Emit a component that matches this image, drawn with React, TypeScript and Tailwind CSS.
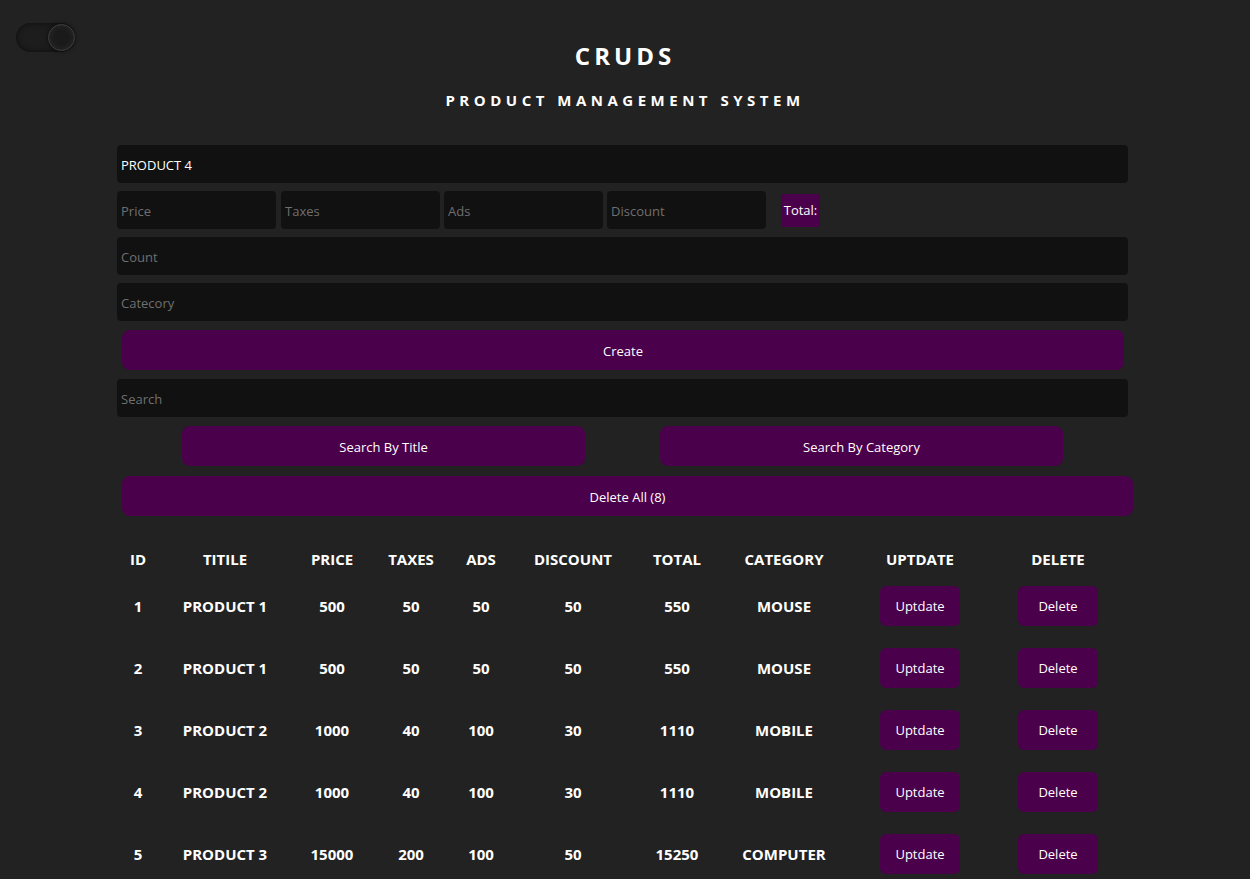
import React from "react";

const rows = [
  { id: 1, title: "PRODUCT 1", price: 500, taxes: 50, ads: 50, discount: 50, total: 550, category: "MOUSE" },
  { id: 2, title: "PRODUCT 1", price: 500, taxes: 50, ads: 50, discount: 50, total: 550, category: "MOUSE" },
  { id: 3, title: "PRODUCT 2", price: 1000, taxes: 40, ads: 100, discount: 30, total: 1110, category: "MOBILE" },
  { id: 4, title: "PRODUCT 2", price: 1000, taxes: 40, ads: 100, discount: 30, total: 1110, category: "MOBILE" },
  { id: 5, title: "PRODUCT 3", price: 15000, taxes: 200, ads: 100, discount: 50, total: 15250, category: "COMPUTER" },
];

const inputCls =
  "h-[38px] rounded-[4px] bg-[#111111] px-[4px] pt-[2px] text-[13px] text-white placeholder:text-[#6f6f6f] outline-none";

const btnCls = "h-[40px] rounded-[8px] bg-[#4b004b] pt-[3px] text-[13px]";

export default function App() {
  return (
    <div
      className="min-h-[879px] w-full bg-[#222222] text-white"
      style={{ fontFamily: '"Open Sans", "Noto Sans", sans-serif' }}
    >
      <div className="relative">
        <div className="absolute left-[16px] top-[23px] h-[29px] w-[59px] rounded-full bg-[#1d1d1d] shadow-[inset_0_0_6px_rgba(0,0,0,0.6)]">
          <div className="absolute right-[0px] top-[1px] h-[27px] w-[27px] rounded-full border border-[#3e3e3e] bg-[radial-gradient(circle_at_50%_50%,#1a1a1a_40%,#2a2a2a_100%)] shadow-[0_0_4px_rgba(0,0,0,0.7)]" />
        </div>
      </div>

      <div className="mx-auto flex w-[1016px] flex-col pt-[38px]">
        <h1 className="text-center text-[24px] font-bold leading-[36px] tracking-[4px]">CRUDS</h1>
        <h2 className="mt-[16px] text-center text-[15px] font-bold leading-[20px] tracking-[4.5px]">
          PRODUCT MANAGEMENT SYSTEM
        </h2>

        <div className="mt-[35px] flex flex-col">
          <input className={`${inputCls} w-[1011px]`} defaultValue="PRODUCT 4" />
          <div className="mt-[8px] flex items-center">
            <input className={`${inputCls} w-[159px]`} placeholder="Price" />
            <input className={`${inputCls} ml-[5px] w-[159px]`} placeholder="Taxes" />
            <input className={`${inputCls} ml-[4px] w-[159px]`} placeholder="Ads" />
            <input className={`${inputCls} ml-[4px] w-[159px]`} placeholder="Discount" />
            <div className="ml-[15px] flex h-[33px] w-[39px] items-center justify-center rounded-[2px] bg-[#4b004b] pt-[2px] text-[13px] font-medium">
              Total:
            </div>
          </div>
          <input className={`${inputCls} mt-[8px] w-[1011px]`} placeholder="Count" />
          <input className={`${inputCls} mt-[8px] w-[1011px]`} placeholder="Catecory" />
          <button className={`${btnCls} ml-[5px] mt-[9px] w-[1002px]`}>Create</button>
          <input className={`${inputCls} mt-[9px] w-[1011px]`} placeholder="Search" />
          <div className="mt-[9px] flex">
            <button className={`${btnCls} ml-[65px] w-[403px]`}>Search By Title</button>
            <button className={`${btnCls} ml-[75px] w-[403px]`}>Search By Category</button>
          </div>
          <button className={`${btnCls} ml-[5px] mt-[10px] w-[1011px]`}>Delete All (8)</button>
        </div>

        <table className="mt-[27px] w-[1006px] table-fixed border-collapse self-start text-center text-[15px] font-bold">
          <colgroup>
            <col className="w-[42px]" />
            <col className="w-[132px]" />
            <col className="w-[82px]" />
            <col className="w-[76px]" />
            <col className="w-[64px]" />
            <col className="w-[120px]" />
            <col className="w-[88px]" />
            <col className="w-[126px]" />
            <col className="w-[146px]" />
            <col className="w-[130px]" />
          </colgroup>
          <thead>
            <tr className="h-[32px]">
              <th>ID</th>
              <th>TITILE</th>
              <th>PRICE</th>
              <th>TAXES</th>
              <th>ADS</th>
              <th>DISCOUNT</th>
              <th>TOTAL</th>
              <th>CATEGORY</th>
              <th>UPTDATE</th>
              <th>DELETE</th>
            </tr>
          </thead>
          <tbody>
            {rows.map((r) => (
              <tr key={r.id} className="h-[62px]">
                <td>{r.id}</td>
                <td>{r.title}</td>
                <td>{r.price}</td>
                <td>{r.taxes}</td>
                <td>{r.ads}</td>
                <td>{r.discount}</td>
                <td>{r.total}</td>
                <td>{r.category}</td>
                <td>
                  <button className="h-[40px] w-[80px] rounded-[6px] bg-[#4b004b] pt-[2px] text-[13px] font-normal">
                    Uptdate
                  </button>
                </td>
                <td>
                  <button className="h-[40px] w-[80px] rounded-[6px] bg-[#4b004b] pt-[2px] text-[13px] font-normal">
                    Delete
                  </button>
                </td>
              </tr>
            ))}
          </tbody>
        </table>
      </div>
    </div>
  );
}
